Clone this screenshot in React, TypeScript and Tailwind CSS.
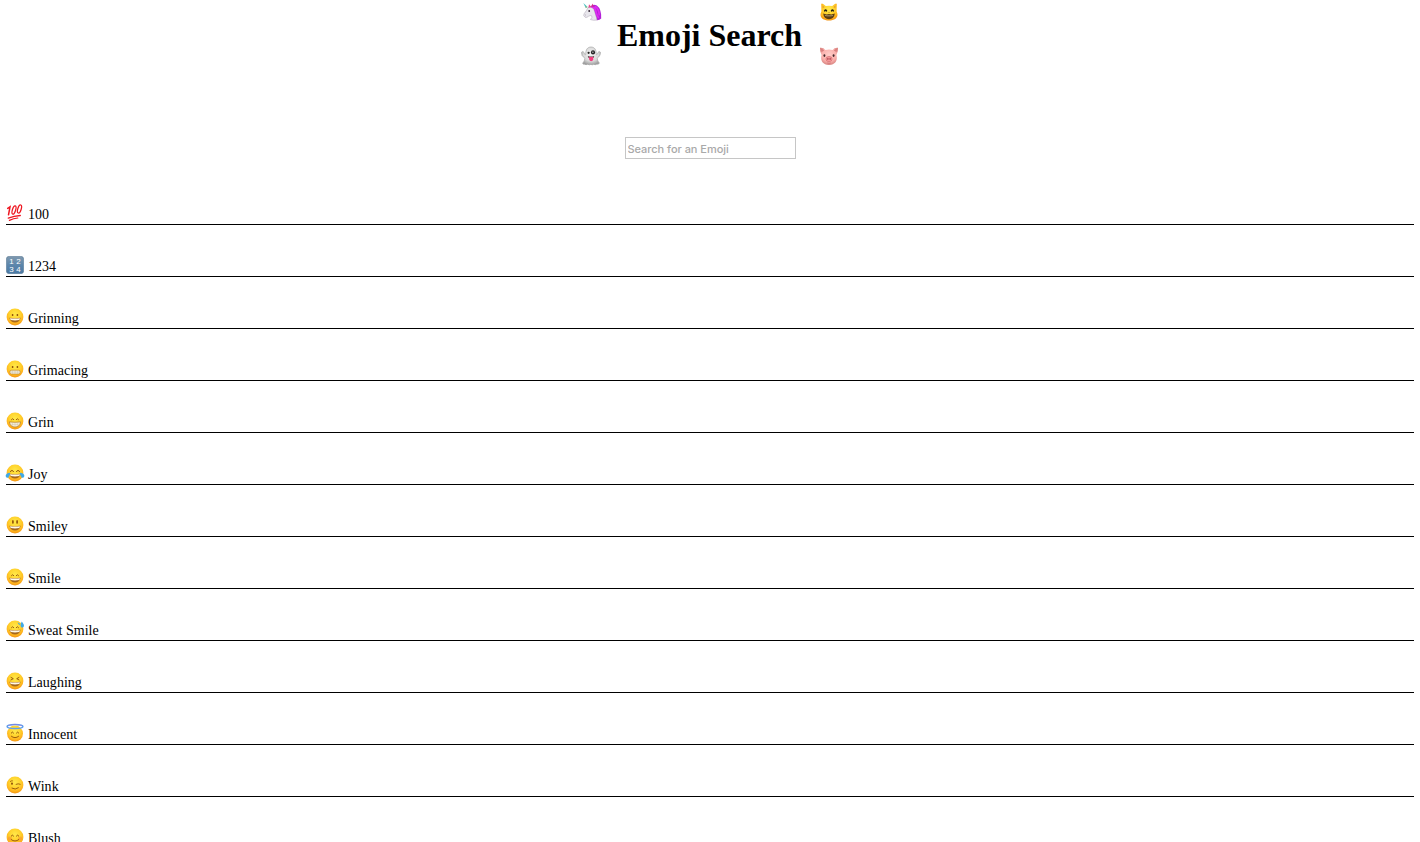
import type { ReactNode } from "react";

const INK = "#8a4a08";

function Defs() {
  return (
    <svg className="absolute h-0 w-0" aria-hidden="true">
      <defs>
        <radialGradient id="skin" cx="0.5" cy="0.34" r="0.68">
          <stop offset="0" stopColor="#ffe84a" />
          <stop offset="0.45" stopColor="#ffd52f" />
          <stop offset="0.78" stopColor="#ffb41e" />
          <stop offset="1" stopColor="#f08f12" />
        </radialGradient>
        <linearGradient id="keycap" x1="0" y1="0" x2="0" y2="1">
          <stop offset="0" stopColor="#8099ae" />
          <stop offset="0.5" stopColor="#5c86ab" />
          <stop offset="1" stopColor="#4a79a3" />
        </linearGradient>
        <radialGradient id="pig" cx="0.5" cy="0.4" r="0.6">
          <stop offset="0" stopColor="#ffcdc8" />
          <stop offset="0.65" stopColor="#fab0ac" />
          <stop offset="1" stopColor="#d88480" />
        </radialGradient>
        <radialGradient id="ghost" cx="0.5" cy="0.4" r="0.6">
          <stop offset="0" stopColor="#f4f4f4" />
          <stop offset="0.65" stopColor="#dadada" />
          <stop offset="1" stopColor="#a0a0a0" />
        </radialGradient>
      </defs>
    </svg>
  );
}

function Face({ children }: { children: ReactNode }) {
  return (
    <svg viewBox="0 0 18 18" className="block h-[18px] w-[18px] shrink-0 overflow-visible" aria-hidden="true">
      <circle cx="9" cy="9" r="8.4" fill="url(#skin)" />
      {children}
    </svg>
  );
}

const ArcEyes = () => (
  <path d="M5.4 7.6Q6.6 5.6 7.8 7.6M10.2 7.6Q11.4 5.6 12.6 7.6" fill="none" stroke={INK} strokeWidth="0.85" strokeLinecap="round" />
);

const OvalEyes = ({ y }: { y: number }) => (
  <g fill={INK}>
    <ellipse cx="6.6" cy={y} rx="0.85" ry="1.1" />
    <ellipse cx="11.4" cy={y} rx="0.85" ry="1.1" />
  </g>
);

const OpenMouth = () => (
  <>
    <path d="M3.4 9.8Q9 10.6 14.6 9.8C14.2 13 12 14.6 9 14.6S3.8 13 3.4 9.8Z" fill="#a5651a" />
    <path d="M4 10.2Q9 10.9 14 10.2Q13.9 11.2 13.2 12.1Q9 12.7 4.8 12.1Q4.1 11.2 4 10.2Z" fill="#fff8e6" />
  </>
);

const Hundred = () => (
  <svg viewBox="0 0 18 18" className="block h-[18px] w-[18px] shrink-0 overflow-visible" aria-hidden="true">
    <g fill="none" stroke="#ee1620" strokeLinecap="round">
      <path d="M1.7 4.4L4 2.9L2.5 10.8" strokeWidth="1.5" />
      <ellipse cx="8" cy="6" rx="1.6" ry="4.3" transform="rotate(17 8 6)" strokeWidth="1.25" />
      <ellipse cx="13.5" cy="5" rx="1.7" ry="4.2" transform="rotate(17 13.5 5)" strokeWidth="1.25" />
      <path d="M2.3 14.2Q8 11.9 14.3 11.5" strokeWidth="1.3" />
      <path d="M3.4 16.4Q7.5 14.5 11.8 14" strokeWidth="1.2" />
    </g>
  </svg>
);

const Numbers = () => (
  <svg viewBox="0 0 18 18" className="block h-[18px] w-[18px] shrink-0" aria-hidden="true">
    <rect x="0.3" y="0.3" width="17.4" height="17.4" rx="3" fill="url(#keycap)" stroke="#5f7f9b" strokeWidth="0.6" />
    <g fill="#fff" fontFamily="Liberation Sans, sans-serif" fontSize="8" textAnchor="middle">
      <text x="5.6" y="8.3">1</text>
      <text x="12.4" y="8.3">2</text>
      <text x="5.6" y="15.5">3</text>
      <text x="12.4" y="15.5">4</text>
    </g>
  </svg>
);

const Grinning = () => (
  <Face>
    <OvalEyes y={7} />
    <OpenMouth />
  </Face>
);

const Grimacing = () => (
  <Face>
    <OvalEyes y={7} />
    <rect x="3.8" y="10.2" width="10.4" height="3.9" rx="1.8" fill="#f3ecda" stroke="#b9832c" strokeWidth="0.6" />
    <path d="M4 12.1H14M6.4 10.4V13.9M9 10.4V13.9M11.6 10.4V13.9" stroke="#bfb59b" strokeWidth="0.35" />
  </Face>
);

const Grin = () => (
  <Face>
    <ArcEyes />
    <path d="M3.4 9.9Q9 10.7 14.6 9.9C14.2 13.4 12 15 9 15S3.8 13.4 3.4 9.9Z" fill="#f6efdc" stroke="#a8691a" strokeWidth="0.6" />
    <path d="M4.4 12.2Q9 13.1 13.6 12.2M6.6 10.4V14M9 10.6V14.7M11.4 10.4V14" fill="none" stroke="#bfb59b" strokeWidth="0.35" />
  </Face>
);

const Joy = () => (
  <Face>
    <path d="M4.3 7.4Q6 5 7.6 7.4M10.4 7.4Q12 5 13.7 7.4" fill="none" stroke={INK} strokeWidth="0.95" strokeLinecap="round" />
    <OpenMouth />
    <path d="M4.2 8.8Q-0.3 9-0.4 12Q0.1 14.6 2.4 13.4Q4 11.8 4.2 8.8Z" fill="#3fa9e8" />
    <path d="M13.8 8.8Q18.3 9 18.4 12Q17.9 14.6 15.6 13.4Q14 11.8 13.8 8.8Z" fill="#3fa9e8" />
  </Face>
);

const Smiley = () => (
  <Face>
    <g fill={INK}>
      <ellipse cx="6.9" cy="5.9" rx="0.85" ry="1.9" />
      <ellipse cx="11.1" cy="5.9" rx="0.85" ry="1.9" />
    </g>
    <OpenMouth />
  </Face>
);

const Smile = () => (
  <Face>
    <ArcEyes />
    <OpenMouth />
  </Face>
);

const SweatSmile = () => (
  <Face>
    <ArcEyes />
    <OpenMouth />
    <path d="M15.7 1.6Q18.5 4.8 17.8 6.6Q17 8 15.2 7.2Q13.7 6.1 15.7 1.6Z" fill="#3fa9e8" />
    <path d="M11.6 2.2Q14.4 3.3 14 4.7Q12.7 5.6 11.6 2.2Z" fill="#3fa9e8" />
  </Face>
);

const Laughing = () => (
  <Face>
    <path d="M5 5.4L7.3 6.7L5 7.9M13 5.4L10.7 6.7L13 7.9" fill="none" stroke={INK} strokeWidth="0.85" strokeLinecap="round" strokeLinejoin="round" />
    <OpenMouth />
  </Face>
);

const Innocent = () => (
  <svg viewBox="0 0 18 18" className="block h-[18px] w-[18px] shrink-0 overflow-visible" aria-hidden="true">
    <circle cx="9" cy="9.6" r="8" fill="url(#skin)" />
    <path d="M5.2 9Q6.4 6.9 7.6 9M10.4 9Q11.6 6.9 12.8 9" fill="none" stroke={INK} strokeWidth="0.9" strokeLinecap="round" />
    <path d="M5.4 12.3Q9 15.2 12.6 12.3" fill="none" stroke={INK} strokeWidth="0.85" strokeLinecap="round" />
    <ellipse cx="9" cy="2.6" rx="7.9" ry="2" fill="none" stroke="#5f9fee" strokeWidth="1.5" />
    <path d="M2.1 1.7Q9-0.9 15.9 1.7" fill="none" stroke="#8a7ddc" strokeWidth="0.7" />
  </svg>
);

const Wink = () => (
  <Face>
    <ellipse cx="6" cy="7.7" rx="0.95" ry="1.1" fill={INK} />
    <path d="M10.1 8.3Q12.2 7.2 14.2 8.2M4.4 5.4Q5.2 4.6 6.4 4.8" fill="none" stroke={INK} strokeWidth="0.8" strokeLinecap="round" />
    <path d="M6 12.2Q9.2 14.2 12.4 11.8" fill="none" stroke={INK} strokeWidth="0.85" strokeLinecap="round" />
  </Face>
);

const Blush = () => (
  <Face>
    <circle cx="3.9" cy="10.4" r="2" fill="#f58b3c" opacity="0.5" />
    <circle cx="14.1" cy="10.4" r="2" fill="#f58b3c" opacity="0.5" />
    <path d="M5.2 8Q6.4 6 7.6 8M10.4 8Q11.6 6 12.8 8" fill="none" stroke={INK} strokeWidth="0.9" strokeLinecap="round" />
    <path d="M5.2 11.6Q9 14.6 12.8 11.6" fill="none" stroke={INK} strokeWidth="0.85" strokeLinecap="round" />
  </Face>
);

const Unicorn = () => (
  <svg viewBox="0 0 20 20" className="block h-5 w-5" aria-hidden="true">
    <path d="M8.2 4.4Q11.4 1.4 14.8 3.6Q19.6 7 19.2 16.4Q17 18.6 14.2 18L9.4 9Z" fill="#b320d8" />
    <path d="M6 5.6Q9.2 3.8 11.6 6.6Q12.8 10.2 13.8 13.4Q14.8 16.2 15 18Q11.6 18.8 8.4 17.6Q10.6 15.6 9.8 13.9Q8.4 13.2 6.8 14.1Q4.8 16.2 3 15.2Q0.8 13.8 2.2 11.6Q4.4 9 6 5.6Z" fill="#e8e6ec" stroke="#aaa2b2" strokeWidth="0.5" />
    <path d="M10.2 5.2Q13.2 5.6 13.8 9Q14.4 12.8 16.4 15.4M13.4 4.8Q16.8 6.8 17.2 12.6" fill="none" stroke="#dc2cf0" strokeWidth="1.7" strokeLinecap="round" />
    <path d="M6.4 5.7L7 2.2L9.6 5.3Z" fill="#e8438c" />
    <path d="M9.4 4.6L10.4 1.5L12 5Z" fill="#d42e80" />
    <path d="M1.3 1L3.9 6.2L5.7 5.1Z" fill="#43bfc0" />
    <path d="M3.5 5.2L5.1 4.9" stroke="#e6b75a" strokeWidth="0.8" />
    <ellipse cx="7.2" cy="9" rx="0.9" ry="1" fill="#332635" />
    <circle cx="3.4" cy="13" r="0.4" fill="#8b7a90" />
  </svg>
);

const Cat = () => (
  <svg viewBox="0 0 20 20" className="block h-5 w-5" aria-hidden="true">
    <path d="M2.4 9.6L2.2 1.9Q3.2 0.5 6.8 4.1Q10 3.2 13.2 4.1Q16.8 0.5 17.8 1.9L17.6 9.6C20.2 14.6 16.8 18.6 10 18.6S-0.2 14.6 2.4 9.6Z" fill="url(#skin)" />
    <path d="M3.7 6.2L3.4 3.4L5.8 4.9ZM16.3 6.2L16.6 3.4L14.2 4.9Z" fill="#e8a22b" />
    <path d="M5.7 8.9Q6.6 7.2 7.5 8.9M12.5 8.9Q13.4 7.2 14.3 8.9" fill="none" stroke="#222017" strokeWidth="1.5" strokeLinecap="round" />
    <path d="M9.2 10.2H10.8L10 11.1Z" fill="#94551f" />
    <path d="M4.2 11.6Q7.2 13 10 12Q12.8 13 15.8 11.6C15.4 15.4 13.4 17.2 10 17.2S4.6 15.4 4.2 11.6Z" fill="#5c3d12" />
    <path d="M5.8 13.2Q10 13.9 14.2 13.2L13.8 13.9Q10 14.5 6.2 13.9Z" fill="#c9b78b" />
  </svg>
);

const Ghost = () => (
  <svg viewBox="0 0 20 20" className="-ml-px block h-5 w-5" aria-hidden="true">
    <path d="M4.7 8.8C4.6 3.4 6.6 1 10 1S15.4 3.4 15.3 8.8Q16.8 8.8 16.9 6.6Q18 4.6 19.4 6.2Q20.2 9.6 16.2 12.2Q16.4 15 18.4 17.2Q17.4 18.6 15.6 18.2Q14.4 19.2 12.8 18.2Q11.4 19.4 9.8 18.4Q8.2 19.4 6.8 18.2Q4.8 19.2 3.6 18.2Q2.4 18.6 1.6 17.4Q3.8 15 3.8 12.2Q-0.2 9.6 0.6 6.2Q2 4.6 3.1 6.6Q3.2 8.8 4.7 8.8Z" fill="url(#ghost)" stroke="#a0a0a0" strokeWidth="0.6" />
    <ellipse cx="7.6" cy="6.8" rx="1.1" ry="1.1" fill="#222" />
    <circle cx="12" cy="6.4" r="2.1" fill="#222" />
    <circle cx="11.9" cy="6.2" r="0.6" fill="#fff" />
    <path d="M6.8 9.9Q10 11 13.2 9.9Q12.8 12.5 10 12.5T6.8 9.9Z" fill="#5a3440" />
    <path d="M8.2 11H12.2V13.6Q11.8 15.3 10.2 15.3T8.2 13.6Z" fill="#f53c80" />
  </svg>
);

const Pig = () => (
  <svg viewBox="0 0 20 20" className="block h-5 w-5" aria-hidden="true">
    <path d="M2.6 9Q0.4 4.7 1 1.8Q4.6 1.4 6.4 4Q10 3 13.6 4Q15.4 1.4 19 1.8Q19.6 4.7 17.4 9C19 14.8 15.8 19 10 19S1 14.8 2.6 9Z" fill="url(#pig)" />
    <path d="M2.4 6.3L1.9 2.8Q4 2.8 5.2 4.6ZM17.6 6.3L18.1 2.8Q16 2.8 14.8 4.6Z" fill="#da8080" />
    <ellipse cx="5.4" cy="9.6" rx="0.95" ry="1.3" fill="#42282b" />
    <ellipse cx="14.6" cy="9.6" rx="0.95" ry="1.3" fill="#42282b" />
    <ellipse cx="10" cy="13" rx="3.1" ry="2.6" fill="#f79a9c" stroke="#d0686c" strokeWidth="0.6" />
    <ellipse cx="8.9" cy="12.9" rx="0.6" ry="1.1" fill="#a03c44" />
    <ellipse cx="11.1" cy="12.9" rx="0.6" ry="1.1" fill="#a03c44" />
    <path d="M8.2 17Q10 17.6 11.8 17" fill="none" stroke="#c4686c" strokeWidth="0.6" />
  </svg>
);

const results = [
  { title: "100", Icon: Hundred },
  { title: "1234", Icon: Numbers },
  { title: "Grinning", Icon: Grinning },
  { title: "Grimacing", Icon: Grimacing },
  { title: "Grin", Icon: Grin },
  { title: "Joy", Icon: Joy },
  { title: "Smiley", Icon: Smiley },
  { title: "Smile", Icon: Smile },
  { title: "Sweat Smile", Icon: SweatSmile },
  { title: "Laughing", Icon: Laughing },
  { title: "Innocent", Icon: Innocent },
  { title: "Wink", Icon: Wink },
  { title: "Blush", Icon: Blush },
];

export default function App() {
  return (
    <div className="h-screen overflow-hidden bg-white font-['Liberation_Serif',serif] text-black">
      <Defs />
      <header className="flex h-[68px] justify-center gap-[15px] pt-0.5">
        <div className="flex flex-col gap-6">
          <Unicorn />
          <Ghost />
        </div>
        <h1 className="w-[187px] pt-[15px] pr-px text-center text-[32px] leading-9 font-bold whitespace-nowrap">Emoji Search</h1>
        <div className="flex flex-col gap-6">
          <Cat />
          <Pig />
        </div>
      </header>
      <div className="flex h-[105px] justify-center pt-[69px]">
        <input
          placeholder="Search for an Emoji"
          className="h-[22px] w-[171px] border border-[#c6c6c6] bg-white px-0.5 pt-0.5 font-['Inter',sans-serif] text-[11px] font-medium tracking-[-0.04px] outline-none placeholder:text-[#a9a9a9] placeholder:opacity-100"
        />
      </div>
      <ul className="px-1.5">
        {results.map(({ title, Icon }) => (
          <li key={title} className="flex h-[52px] items-end gap-1 border-b border-black">
            <div className="pb-0.5">
              <Icon />
            </div>
            <span className="pb-px text-sm leading-4 tracking-[0.03px]">{title}</span>
          </li>
        ))}
      </ul>
    </div>
  );
}
